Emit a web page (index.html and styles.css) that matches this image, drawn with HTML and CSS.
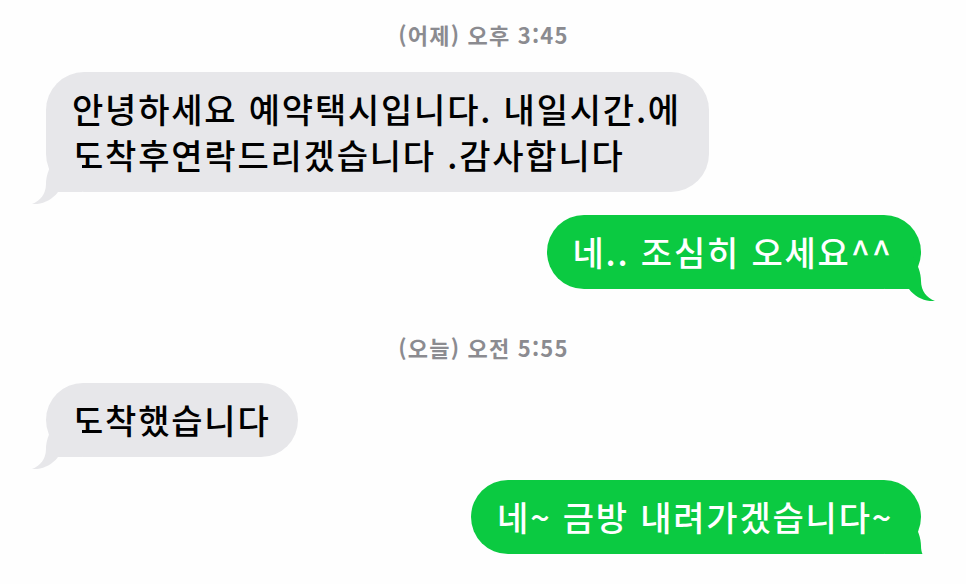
FILE: index.html
```html
<!DOCTYPE html>
<html lang="ko">
<head>
    <meta charset="UTF-8">
    <meta name="viewport" content="width=device-width, initial-scale=1.0">
    <title>메시지</title>
    <link rel="stylesheet" href="styles.css">
</head>
<body>
    <div class="thread">
        <div class="stamp"><b>(어제)</b> 오후 3:45</div>

        <div class="row in first">
            <div class="bubble">
                안녕하세요 예약택시입니다. 내일시간.에<br>도착후연락드리겠습니다 .감사합니다
                <svg class="tail" viewBox="0 0 50 44" aria-hidden="true"><path d="M22 0 C17 8 14 16 14 24 C14 34 8 41 0 44 C10 45 20 40 26 32 L50 32 L50 0 Z"/></svg>
            </div>
        </div>

        <div class="row out">
            <div class="bubble">
                네.. 조심히 오세요^^
                <svg class="tail" viewBox="0 0 50 44" aria-hidden="true"><path d="M22 0 C17 8 14 16 14 24 C14 34 8 41 0 44 C10 45 20 40 26 32 L50 32 L50 0 Z"/></svg>
            </div>
        </div>

        <div class="stamp second"><b>(오늘)</b> 오전 5:55</div>

        <div class="row in first">
            <div class="bubble">
                도착했습니다
                <svg class="tail" viewBox="0 0 50 44" aria-hidden="true"><path d="M22 0 C17 8 14 16 14 24 C14 34 8 41 0 44 C10 45 20 40 26 32 L50 32 L50 0 Z"/></svg>
            </div>
        </div>

        <div class="row out">
            <div class="bubble">
                네~ 금방 내려가겠습니다~
                <svg class="tail" viewBox="0 0 50 44" aria-hidden="true"><path d="M22 0 C17 8 14 16 14 24 C14 34 8 41 0 44 C10 45 20 40 26 32 L50 32 L50 0 Z"/></svg>
            </div>
        </div>
    </div>
</body>
</html>
```

FILE: styles.css
```css
/* Estilo Geral */
body {
    margin: 0;
    background: #fefefe;
    font-family: "Noto Sans CJK KR", "Noto Sans", sans-serif;
}

.thread {
    display: flex;
    flex-direction: column;
    padding: 20px 45px 0 46px;
}

/* Data / hora */
.stamp {
    text-align: center;
    color: #8b8b90;
    font-size: 22px;
    line-height: 28px;
    font-weight: 600;
    letter-spacing: 1.2px;
    margin-bottom: 24px;
}

.stamp b {
    font-weight: 600;
}

.stamp.second {
    margin-top: 44px;
    margin-bottom: 22px;
}

/* Linhas de mensagem */
.row {
    display: flex;
    margin-top: 23px;
}

.row.first {
    margin-top: 0;
}

.row.in {
    justify-content: flex-start;
}

.row.out {
    justify-content: flex-end;
}

/* Balão */
.bubble {
    position: relative;
    padding: 14px 28px 14px 26px;
    border-radius: 38px;
    font-size: 34px;
    font-weight: 500;
    line-height: 46px;
    letter-spacing: 1.8px;
    white-space: nowrap;
}

.in .bubble {
    background: #e7e7ea;
    color: #000;
}

.out .bubble {
    background: #0bca41;
    color: #fff;
}

.tail {
    position: absolute;
    bottom: -12px;
    width: 50px;
    height: 44px;
}

.in .tail {
    left: -14px;
    fill: #e7e7ea;
}

.out .tail {
    right: -14px;
    fill: #0bca41;
    transform: scaleX(-1);
}
```
